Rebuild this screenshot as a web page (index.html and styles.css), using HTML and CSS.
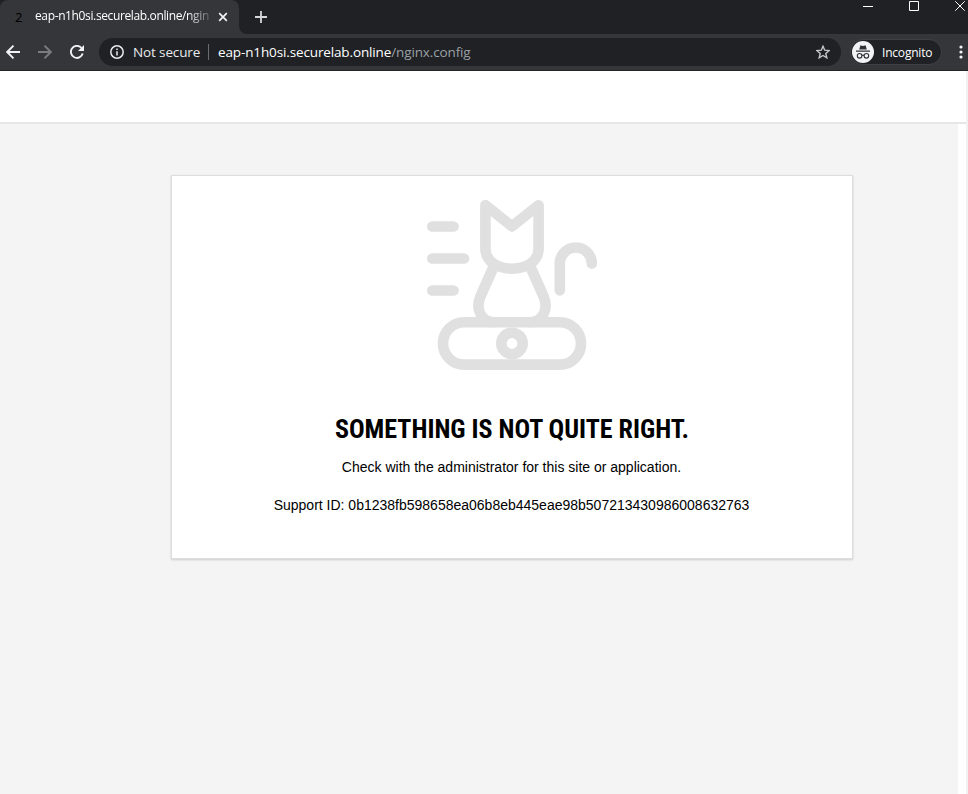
FILE: index.html
```html
<!DOCTYPE html>
<html lang="en">
<head>
<meta charset="utf-8">
<title>eap-n1h0si.securelab.online/nginx.config</title>
<link rel="stylesheet" href="styles.css">
</head>
<body>
<header class="browser">
  <div class="tabs">
    <div class="tab">
      <span class="favicon">2</span>
      <span class="tab-title"><span class="tab-text">eap-n1h0si.securelab.online/ngin</span></span>
      <svg class="tab-close" width="10" height="10" viewBox="0 0 10 10"><path d="M1.2 1.2l7.6 7.6M8.8 1.2L1.2 8.8"/></svg>
    </div>
    <svg class="tab-curve" width="8" height="8" viewBox="0 0 8 8"><path d="M0 0A8 8 0 0 0 8 8H0z"/></svg>
    <svg class="new-tab" width="12" height="12" viewBox="0 0 12 12"><path d="M6 0v12M0 6h12"/></svg>
    <div class="window-controls">
      <svg width="10" height="12" viewBox="0 0 10 12"><path d="M0 6.5h10"/></svg>
      <svg width="10" height="12" viewBox="0 0 10 12"><path d="M.5 1.5h9v9h-9z"/></svg>
      <svg width="10" height="12" viewBox="0 0 10 12"><path d="M.3 1.3l9.4 9.4M9.7 1.3L.3 10.7"/></svg>
    </div>
  </div>
  <div class="toolbar">
    <svg class="nav back" width="14" height="14" viewBox="0 0 14 14"><path d="M14 7H1.2M7.5.7L1.2 7l6.3 6.3"/></svg>
    <svg class="nav forward" width="14" height="14" viewBox="0 0 14 14"><path d="M0 7h12.8M6.5.7L12.8 7l-6.3 6.3"/></svg>
    <svg class="nav reload" width="14" height="14" viewBox="0 0 14 14"><path d="M12.7 8.5A6 6 0 1 1 11.4 2.9"/><path class="solid" d="M14 0v6H8z"/></svg>
    <div class="omnibox">
      <svg class="info" width="14" height="14" viewBox="0 0 14 14"><circle cx="7" cy="7" r="6.2"/><path d="M7 6.2v4.3M7 3.5V5"/></svg>
      <span class="secure">Not secure</span>
      <span class="divider"></span>
      <span class="url">eap-n1h0si.securelab.online<span class="path">/nginx.config</span></span>
      <svg class="star" width="14" height="14" viewBox="0 0 14 14"><path d="M7 1.2l1.7 4 4.4.4-3.3 2.9 1 4.3L7 10.5l-3.8 2.3 1-4.3L.9 5.6l4.4-.4z"/></svg>
    </div>
    <div class="profile">
      <svg width="22" height="22" viewBox="0 0 22 22"><circle cx="11" cy="11" r="11" fill="#f1f3f4"/><path fill="#303134" d="M7.2 8.6L8.2 4.9Q8.4 4.2 9.1 4.4L11 4.9l1.9-.5q.7-.2.9.5l1 3.7zM4 9.6h14v1.2H4z"/><g fill="none" stroke="#303134" stroke-width="1.1"><circle cx="7.6" cy="14.8" r="2.3"/><circle cx="14.4" cy="14.8" r="2.3"/><path d="M9.9 14.5q1.1-.8 2.2 0"/></g></svg>
      <span class="profile-name">Incognito</span>
    </div>
    <svg class="menu" width="4" height="14" viewBox="0 0 4 14"><circle cx="2" cy="2" r="1.6"/><circle cx="2" cy="7" r="1.6"/><circle cx="2" cy="12" r="1.6"/></svg>
  </div>
</header>
<div class="site-header"></div>
<main class="page">
  <section class="card">
    <svg class="cat" width="172" height="172" viewBox="426 199 172 172">
      <path d="M432.3 226.5h21.2M432.3 258.5H464M432.3 290.5h21.2"/>
      <path d="M512 226.4L485.4 205.2V248.5C485.4 261 497 268.7 512 268.7S538.6 261 538.6 248.5V205.2z"/>
      <path d="M493.5 267L480.2 297C475 310 482 321.6 493.5 322.2M530.5 267L543.8 297C549 310 542 321.6 530.5 322.2"/>
      <rect x="443" y="322.2" width="138" height="42.4" rx="21.2"/>
      <circle cx="512" cy="343.4" r="10.65"/>
      <path d="M559.8 290.3V263.5a16 16 0 0 1 32 0"/>
    </svg>
    <h1>SOMETHING IS NOT QUITE RIGHT.</h1>
    <p>Check with the administrator for this site or application.</p>
    <p class="support">Support ID: 0b1238fb598658ea06b8eb445eae98b507213430986008632763</p>
  </section>
</main>
</body>
</html>
```
FILE: styles.css
```css
* { box-sizing: border-box; }
body {
  margin: 0;
  height: 794px;
  display: flex;
  flex-direction: column;
  overflow: hidden;
  background: #f1f1f1;
  font-family: "Liberation Sans", Arial, sans-serif;
}
svg { display: block; flex: none; fill: none; }
.browser {
  height: 71px;
  flex: none;
  background: #35363a;
  border-bottom: 1px solid #242427;
  font-family: "Open Sans", sans-serif;
  color: #fff;
  white-space: nowrap;
}
.tabs { display: flex; height: 34px; background: #202124; }
.tab {
  width: 239px;
  display: flex;
  align-items: center;
  padding-left: 15px;
  background: #35363a;
  border-radius: 8px 8px 0 0;
}
.favicon { width: 20px; font: 13px/16px "Noto Sans", sans-serif; color: #000; }
.tab-title {
  width: 176px;
  -webkit-mask-image: linear-gradient(to right, #000 152px, transparent 180px);
  mask-image: linear-gradient(to right, #000 152px, transparent 180px);
}
.tab-text { display: block; font-size: 12px; line-height: 18px; letter-spacing: -.37px; padding-bottom: 2px; }
.tab-close { margin-left: 7px; stroke: #f1f3f4; stroke-width: 1.7; }
.tab-curve { align-self: flex-end; fill: #35363a; }
.new-tab { margin: 11px 0 0 8px; stroke: #d6d7d9; stroke-width: 1.8; }
.window-controls { display: flex; gap: 36px; margin-left: auto; padding-right: 3px; stroke: #fff; }
.toolbar { display: flex; align-items: center; height: 36px; padding: 0 5px 0 6px; }
.nav { stroke: #f1f3f4; stroke-width: 1.9; margin-right: 18px; }
.forward { stroke: #7b7c7f; }
.solid { fill: #f1f3f4; stroke: none; }
.reload { margin-right: 15px; }
.omnibox {
  width: 742px;
  height: 28px;
  display: flex;
  align-items: center;
  padding: 0 11px;
  border-radius: 14px;
  background: #202124;
  font-size: 13.5px;
  letter-spacing: -.13px;
}
.info { stroke: #e8eaed; stroke-width: 1.5; }
.secure { margin-left: 9px; width: 68px; color: #e8eaed; }
.divider { width: 1px; height: 16px; margin: 0 9px 0 7px; background: #6b6c6f; }
.url { color: #fff; }
.path { color: #9aa0a6; }
.star { margin-left: auto; stroke: #c4c6c9; stroke-width: 1.4; }
.profile {
  width: 92px;
  height: 26px;
  display: flex;
  align-items: center;
  margin-left: 9px;
  padding-left: 1px;
  border: 1px solid #3e4043;
  border-radius: 13px;
  background: #202124;
}
.profile-name { margin-left: 8px; font-size: 12px; letter-spacing: -.2px; }
.menu { margin-left: 17px; fill: #f1f3f4; }
.site-header {
  height: 53px;
  flex: none;
  margin-right: 2px;
  border-bottom: 2px solid #e6e6e6;
  background: #fff;
}
.page {
  flex: 1;
  padding: 51px 0 0 171px;
  margin-right: 2px;
  border-right: 8px solid #fff;
  background: #f4f4f4;
}
.card {
  width: 682px;
  height: 384px;
  display: flex;
  flex-direction: column;
  align-items: center;
  padding-top: 23px;
  border: 1px solid #ddd;
  background: #fff;
  box-shadow: 0 1px 2px #ccc;
  color: #000;
}
.cat { stroke: #e0e0e0; stroke-width: 10.65; stroke-linecap: round; stroke-linejoin: round; }
h1 { margin: 42px 0 0; font: 700 26px/32px "Roboto Condensed", Roboto, sans-serif; font-stretch: condensed; white-space: nowrap; }
p { margin: 13px 1px 0 0; font-size: 14px; line-height: 18px; white-space: nowrap; }
.support { margin-top: 20px; }
```
